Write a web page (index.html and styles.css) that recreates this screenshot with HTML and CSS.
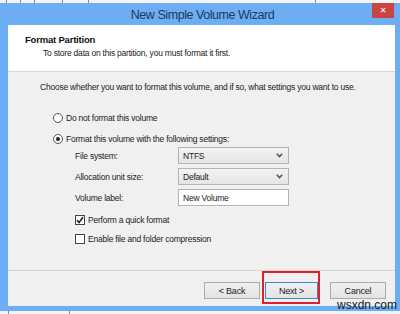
FILE: index.html
```html
<!DOCTYPE html>
<html lang="en">
<head>
    <meta charset="UTF-8">
    <meta name="viewport" content="width=device-width, initial-scale=1.0">
    <link rel="stylesheet" href="styles.css">
</head>
<body>
    <div class="desktop">
        <div class="strip strip-top">
            <span class="tick t1"></span><span class="tick t2"></span><span class="tick t3"></span>
            <span class="tick t4"></span><span class="tick t5"></span><span class="tick t6"></span>
        </div>
        <div class="window">
            <div class="titlebar">
                <span></span>
                <span class="title">New Simple Volume Wizard</span>
                <span class="close">&#x2715;</span>
            </div>
            <div class="header">
                <div class="header-title">Format Partition</div>
                <div class="header-sub">To store data on this partition, you must format it first.</div>
            </div>
            <div class="content">
                <p class="intro">Choose whether you want to format this volume, and if so, what settings you want to use.</p>
                <div class="option">
                    <span class="radio"></span>
                    <span>Do not format this volume</span>
                </div>
                <div class="option">
                    <span class="radio checked"></span>
                    <span>Format this volume with the following settings:</span>
                </div>
                <div class="settings">
                    <span class="label">File system:</span>
                    <div class="combo">
                        <span>NTFS</span>
                        <svg class="chev" width="7" height="5" viewBox="0 0 7 5"><path d="M0.8 0.8 L3.5 3.6 L6.2 0.8" fill="none" stroke="#555" stroke-width="1.5"/></svg>
                    </div>
                    <span class="label">Allocation unit size:</span>
                    <div class="combo">
                        <span>Default</span>
                        <svg class="chev" width="7" height="5" viewBox="0 0 7 5"><path d="M0.8 0.8 L3.5 3.6 L6.2 0.8" fill="none" stroke="#555" stroke-width="1.5"/></svg>
                    </div>
                    <span class="label">Volume label:</span>
                    <div class="textbox">New Volume</div>
                </div>
                <div class="check-row first">
                    <span class="check">
                        <svg width="8" height="8" viewBox="0 0 8 8"><path d="M1 4.2 L3 6.4 L7 1.2" fill="none" stroke="#222" stroke-width="1.6"/></svg>
                    </span>
                    <span>Perform a quick format</span>
                </div>
                <div class="check-row">
                    <span class="check"></span>
                    <span>Enable file and folder compression</span>
                </div>
            </div>
            <div class="footer">
                <button class="btn">&lt; Back</button>
                <button class="btn btn-default">Next &gt;<span class="highlight"></span></button>
                <button class="btn btn-cancel">Cancel</button>
            </div>
        </div>
        <div class="strip strip-bottom">
            <span class="tick b1"></span><span class="tick b2"></span>
        </div>
        <span class="watermark">wsxdn.com</span>
    </div>
</body>
</html>
```

FILE: styles.css
```css
* {
    box-sizing: border-box;
}
body {
    margin: 0;
    background: #fff;
    font-family: "Liberation Sans", Arial, sans-serif;
    font-size: 8.5px;
    letter-spacing: -0.22px;
    color: #222;
}
.desktop {
    width: 400px;
    height: 314px;
    position: relative;
    overflow: hidden;
    display: flex;
    flex-direction: column;
}
.strip {
    height: 3px;
    flex: none;
    background: #f4f4f4;
    position: relative;
}
.tick {
    position: absolute;
    top: 0;
    bottom: 0;
    width: 1px;
    background: #8a8a8a;
}
.t1 { left: 6px; }
.t2 { left: 20px; }
.t3 { left: 34px; }
.t4 { left: 62px; }
.t5 { left: 88px; }
.t6 { left: 315px; }
.b1 { left: 8px; }
.b2 { left: 69px; }
.window {
    flex: none;
    height: 308px;
    background: #6cadf3;
    border-left: 8px solid #6cadf3;
    border-right: 5px solid #6cadf3;
    border-bottom: 5px solid #6cadf3;
    display: flex;
    flex-direction: column;
}
.titlebar {
    height: 22px;
    flex: none;
    display: grid;
    grid-template-columns: 1fr auto 1fr;
    align-items: start;
}
.title {
    font-size: 12.5px;
    letter-spacing: -0.45px;
    color: #1c3a5c;
    padding: 5px 0 0 2px;
}
.close {
    justify-self: end;
    margin-right: 1px;
    width: 22px;
    height: 15px;
    background: #c94545;
    color: #fff;
    font-family: "DejaVu Sans", sans-serif;
    font-size: 8px;
    font-weight: bold;
    display: flex;
    align-items: center;
    justify-content: center;
}
.header {
    height: 47px;
    flex: none;
    background: #fff;
    border-bottom: 1px solid #d6d6d6;
    padding: 9px 0 0 17px;
}
.header-title {
    font-weight: bold;
    font-size: 9.5px;
    letter-spacing: -0.2px;
    color: #111;
}
.header-sub {
    margin: 3px 0 0 18px;
}
.content {
    height: 199px;
    flex: none;
    background: #f0f0f0;
    border-bottom: 1px solid #d6d6d6;
    padding: 9px 0 0 32px;
}
.intro {
    margin: 0 0 19px;
    line-height: 12px;
}
.option {
    display: flex;
    align-items: center;
    gap: 3px;
    margin-left: 13px;
    height: 12px;
    margin-bottom: 9px;
}
.radio {
    width: 10px;
    height: 10px;
    border: 1px solid #555;
    border-radius: 50%;
    background: #fff;
    position: relative;
}
.radio.checked::after {
    content: "";
    position: absolute;
    left: 2px;
    top: 2px;
    width: 4px;
    height: 4px;
    border-radius: 50%;
    background: #222;
}
.settings {
    display: grid;
    grid-template-columns: 103px 111px;
    grid-auto-rows: 17px;
    row-gap: 4px;
    align-items: center;
    margin: -7px 0 0 35px;
}
.combo {
    height: 17px;
    border: 1px solid #b4b4b4;
    background: linear-gradient(#f3f3f3, #e5e5e5);
    display: flex;
    justify-content: space-between;
    align-items: center;
    padding: 0 5px 0 4px;
}
.textbox {
    height: 17px;
    border: 1px solid #b4b4b4;
    background: #fff;
    padding: 0 4px;
    display: flex;
    align-items: center;
}
.check-row {
    display: flex;
    align-items: center;
    gap: 3px;
    margin: 7px 0 0 35px;
    height: 12px;
}
.check-row.first {
    margin-top: 8px;
}
.check {
    width: 10px;
    height: 10px;
    border: 1px solid #444;
    background: #fff;
    display: flex;
    align-items: center;
    justify-content: center;
}
.footer {
    flex: 1;
    background: #f0f0f0;
    display: flex;
    align-items: flex-start;
    justify-content: flex-end;
    padding: 11px 9px 0 0;
    gap: 5px;
}
.btn {
    width: 56px;
    height: 17px;
    margin: 0;
    padding: 0;
    font-family: inherit;
    font-size: 9px;
    letter-spacing: -0.2px;
    color: #222;
    border: 1px solid #acacac;
    background: linear-gradient(#f0f0f0, #e3e3e3);
    position: relative;
}
.btn-default {
    width: 53px;
    border-color: #3b8ad6;
}
.btn-cancel {
    margin-left: 7px;
}
.highlight {
    position: absolute;
    left: -4px;
    right: -3px;
    top: -12px;
    bottom: -6px;
    border: 2px solid #e0202c;
}
.watermark {
    position: absolute;
    left: 337px;
    top: 298px;
    font-size: 12px;
    letter-spacing: 0;
    color: #1a1a1a;
}
```
